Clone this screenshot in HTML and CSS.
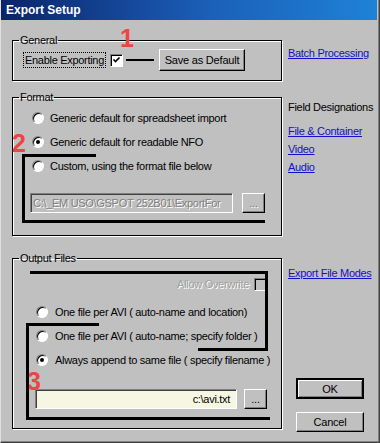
FILE: index.html
```html
<!DOCTYPE html>
<html>
<head>
<meta charset="utf-8">
<link rel="stylesheet" href="styles.css">
</head>
<body>
<div class="window">
  <div class="titlebar">Export Setup</div>
  <div class="body">
    <div class="left">
      <fieldset class="group general">
        <legend>General</legend>
        <div class="general-row">
          <span class="focus-label">Enable Exporting</span>
          <span class="check checked"><svg width="9" height="9" viewBox="0 0 9 9"><path d="M1.5 3.5 L3.5 5.5 L7.5 1.5" stroke="#000" stroke-width="1.7" fill="none"/></svg></span>
          <button class="btn save">Save as Default</button>
        </div>
      </fieldset>

      <fieldset class="group format">
        <legend>Format</legend>
        <div class="opt"><span class="radio"></span><span>Generic default for spreadsheet import</span></div>
        <div class="opt"><span class="radio on"></span><span>Generic default for readable NFO</span></div>
        <div class="opt"><span class="radio"></span><span>Custom, using the format file below</span></div>
        <div class="file-row fr-format">
          <div class="field disabled"><span>C:\_EM USO\GSPOT 252B01\ExportFor</span></div>
          <button class="btn dots disabled-btn">...</button>
        </div>
      </fieldset>

      <fieldset class="group output">
        <legend>Output Files</legend>
        <div class="allow-row"><span class="disabled-text">Allow Overwrite</span><span class="check grey"></span></div>
        <div class="opt"><span class="radio"></span><span>One file per AVI ( auto-name and location)</span></div>
        <div class="opt"><span class="radio"></span><span>One file per AVI ( auto-name; specify folder )</span></div>
        <div class="opt"><span class="radio on"></span><span>Always append to same file ( specify filename )</span></div>
        <div class="file-row fr-output">
          <div class="field yellow"><span>c:\avi.txt</span></div>
          <button class="btn dots">...</button>
        </div>
      </fieldset>
    </div>

    <div class="right">
      <a class="link batch">Batch Processing</a>
      <div class="label fd">Field Designations</div>
      <a class="link fc">File &amp; Container</a>
      <a class="link sub">Video</a>
      <a class="link sub">Audio</a>
      <a class="link efm">Export File Modes</a>
      <button class="btn ok">OK</button>
      <button class="btn cancel">Cancel</button>
    </div>
  </div>

  <div class="anno num n1">1</div>
  <div class="anno num n2">2</div>
  <div class="anno num n3">3</div>
  <div class="anno line l1"></div>
  <div class="anno bracket b-format"></div>
  <div class="anno bracket b-out1"></div>
  <div class="anno bracket b-out2"></div>
  <div class="anno hline h-out1"></div>
  <div class="anno hline h-out2"></div>
</div>
</body>
</html>
```

FILE: styles.css
```css
* { box-sizing: border-box; }
html, body { margin: 0; padding: 0; }
body {
  width: 380px;
  height: 443px;
  background: #c0c0c0;
  font-family: "Liberation Sans", Arial, sans-serif;
  font-size: 11px;
  letter-spacing: -0.3px;
  color: #000;
  overflow: hidden;
}
.window {
  position: relative;
  width: 380px;
  height: 443px;
  background: #c0c0c0;
  border-left: 1px solid #dfdfdf;
  border-right: 1px solid #404040;
  border-bottom: 1px solid #404040;
  box-shadow: inset -1px -1px 0 #808080;
}
.titlebar {
  height: 20px;
  margin-right: 2px;
  background: linear-gradient(to right, #0a246a 0%, #1b5fb8 55%, #1e82d6 100%);
  color: #fff;
  font-weight: bold;
  font-size: 12px;
  line-height: 20px;
  padding-left: 5px;
  letter-spacing: 0;
}
.body {
  display: grid;
  grid-template-columns: 270px 1fr;
  column-gap: 5px;
  padding-left: 11px;
}
.left { display: flex; flex-direction: column; }
.group {
  margin: 0;
  border: 1px solid #000;
  box-shadow: 1px 1px 0 #fff, inset 1px 1px 0 #fff;
  min-width: 0;
}
.group legend {
  padding: 0 1px;
  line-height: 13px;
  height: 13px;
}
.general { margin-top: 14px; padding: 2px 0 9px 10px; }
.general legend { margin-left: -4px; }
.format legend { margin-left: -11px; }
.output legend { margin-left: -16px; }
.general-row { display: flex; align-items: center; height: 22px; }
.focus-label {
  border: 1px dotted #000;
  padding: 0 1px;
  line-height: 14px;
}
.check {
  width: 13px; height: 13px;
  background: #fff;
  border: 1px solid;
  border-color: #808080 #fff #fff #808080;
  box-shadow: inset 1px 1px 0 #000;
  display: inline-flex; align-items: center; justify-content: center;
  margin-left: 4px;
  flex: none;
}
.check svg { margin: 1px 0 0 1px; }
.check.grey { background: #c0c0c0; margin-left: 5px; }
.btn {
  font-family: "Liberation Sans", Arial, sans-serif;
  font-size: 11px;
  letter-spacing: -0.2px;
  color: #000;
  background: #c0c0c0;
  border: 1px solid;
  border-color: #fff #000 #000 #fff;
  box-shadow: inset -1px -1px 0 #808080;
  padding: 0;
  margin: 0;
  white-space: nowrap;
}
.save { margin-left: 36px; width: 86px; height: 22px; }

.format { margin-top: 10px; padding: 2px 16px 22px 17px; }
.output { margin-top: 16px; padding: 7px 14px 19px 22px; }
.opt { display: flex; align-items: center; height: 24px; white-space: nowrap; }
.opt .radio { margin-right: 6px; }
.format .opt .radio { margin-left: 2px; }
.output .opt .radio { margin-left: 1px; margin-right: 7px; }
.radio {
  width: 12px; height: 12px;
  border-radius: 50%;
  background: #fff;
  border: 1px solid;
  border-color: #808080 #fff #fff #808080;
  box-shadow: inset 1px 1px 0 #000;
  position: relative;
  flex: none;
}
.radio.on::after {
  content: "";
  position: absolute;
  left: 3px; top: 3px;
  width: 4px; height: 4px;
  border-radius: 50%;
  background: #000;
}
.file-row { display: flex; align-items: center; justify-content: space-between; }
.fr-format { margin-top: 15px; }
.fr-output { margin-top: 17px; }
.field {
  height: 20px;
  border: 1px solid;
  border-color: #808080 #fff #fff #808080;
  box-shadow: inset 1px 1px 0 #404040;
  overflow: hidden;
  white-space: nowrap;
  display: flex; align-items: center;
  padding: 0 2px;
}
.field.disabled { width: 203px; background: #c0c0c0; color: #808080; text-shadow: 1px 1px 0 #fff; }
.field.yellow { width: 202px; background: #f6f7e2; justify-content: flex-end; padding-right: 6px; }
.dots { width: 23px; height: 20px; }
.disabled-btn { color: #808080; text-shadow: 1px 1px 0 #fff; }
.allow-row { display: flex; align-items: center; justify-content: flex-end; height: 24px; margin-bottom: 4px; }
.disabled-text { color: #a0a0a0; text-shadow: 1px 1px 0 #fff; }

.right { display: flex; flex-direction: column; align-items: flex-start; padding-left: 1px; }
.link { color: #1010c8; text-decoration: underline; line-height: 13px; }
.label { line-height: 13px; }
.batch { margin-top: 27px; }
.fd { margin-top: 41px; }
.fc { margin-top: 11px; }
.sub { margin-top: 5px; }
.efm { margin-top: 93px; }
.ok {
  margin-top: 98px; margin-left: 8px;
  width: 68px; height: 21px;
  border: 2px solid #000;
  box-shadow: inset 1px 1px 0 #fff, inset -1px -1px 0 #808080;
}
.cancel { margin-top: 13px; margin-left: 8px; width: 68px; height: 20px; }

.anno { position: absolute; }
.num {
  color: #f04444;
  font-family: "Liberation Sans", Arial, sans-serif;
  font-weight: bold;
  font-size: 25px;
  line-height: 22px;
  letter-spacing: 0;
}
.n1 { left: 119px; top: 27px; }
.n2 { left: 11px; top: 132px; }
.n3 { left: 26px; top: 370px; }
.line { background: #000; }
.l1 { left: 125px; top: 59px; width: 28px; height: 2px; }
.bracket { border: 3px solid #000; }
.b-format { left: 21px; top: 154px; width: 243px; height: 69px; border-right: none; }
.b-format::before { content: ""; position: absolute; left: 71px; top: -3px; right: 0; height: 3px; background: #c0c0c0; }
.b-out1 { left: 29px; top: 271px; width: 238px; height: 80px; border-left: none; border-bottom: none; }
.h-out1 { left: 197px; top: 348px; width: 70px; height: 3px; background: #000; }
.b-out2 { left: 25px; top: 323px; width: 244px; height: 97px; border-right: none; border-top: none; }
.h-out2 { left: 25px; top: 323px; width: 73px; height: 3px; background: #000; }
```
